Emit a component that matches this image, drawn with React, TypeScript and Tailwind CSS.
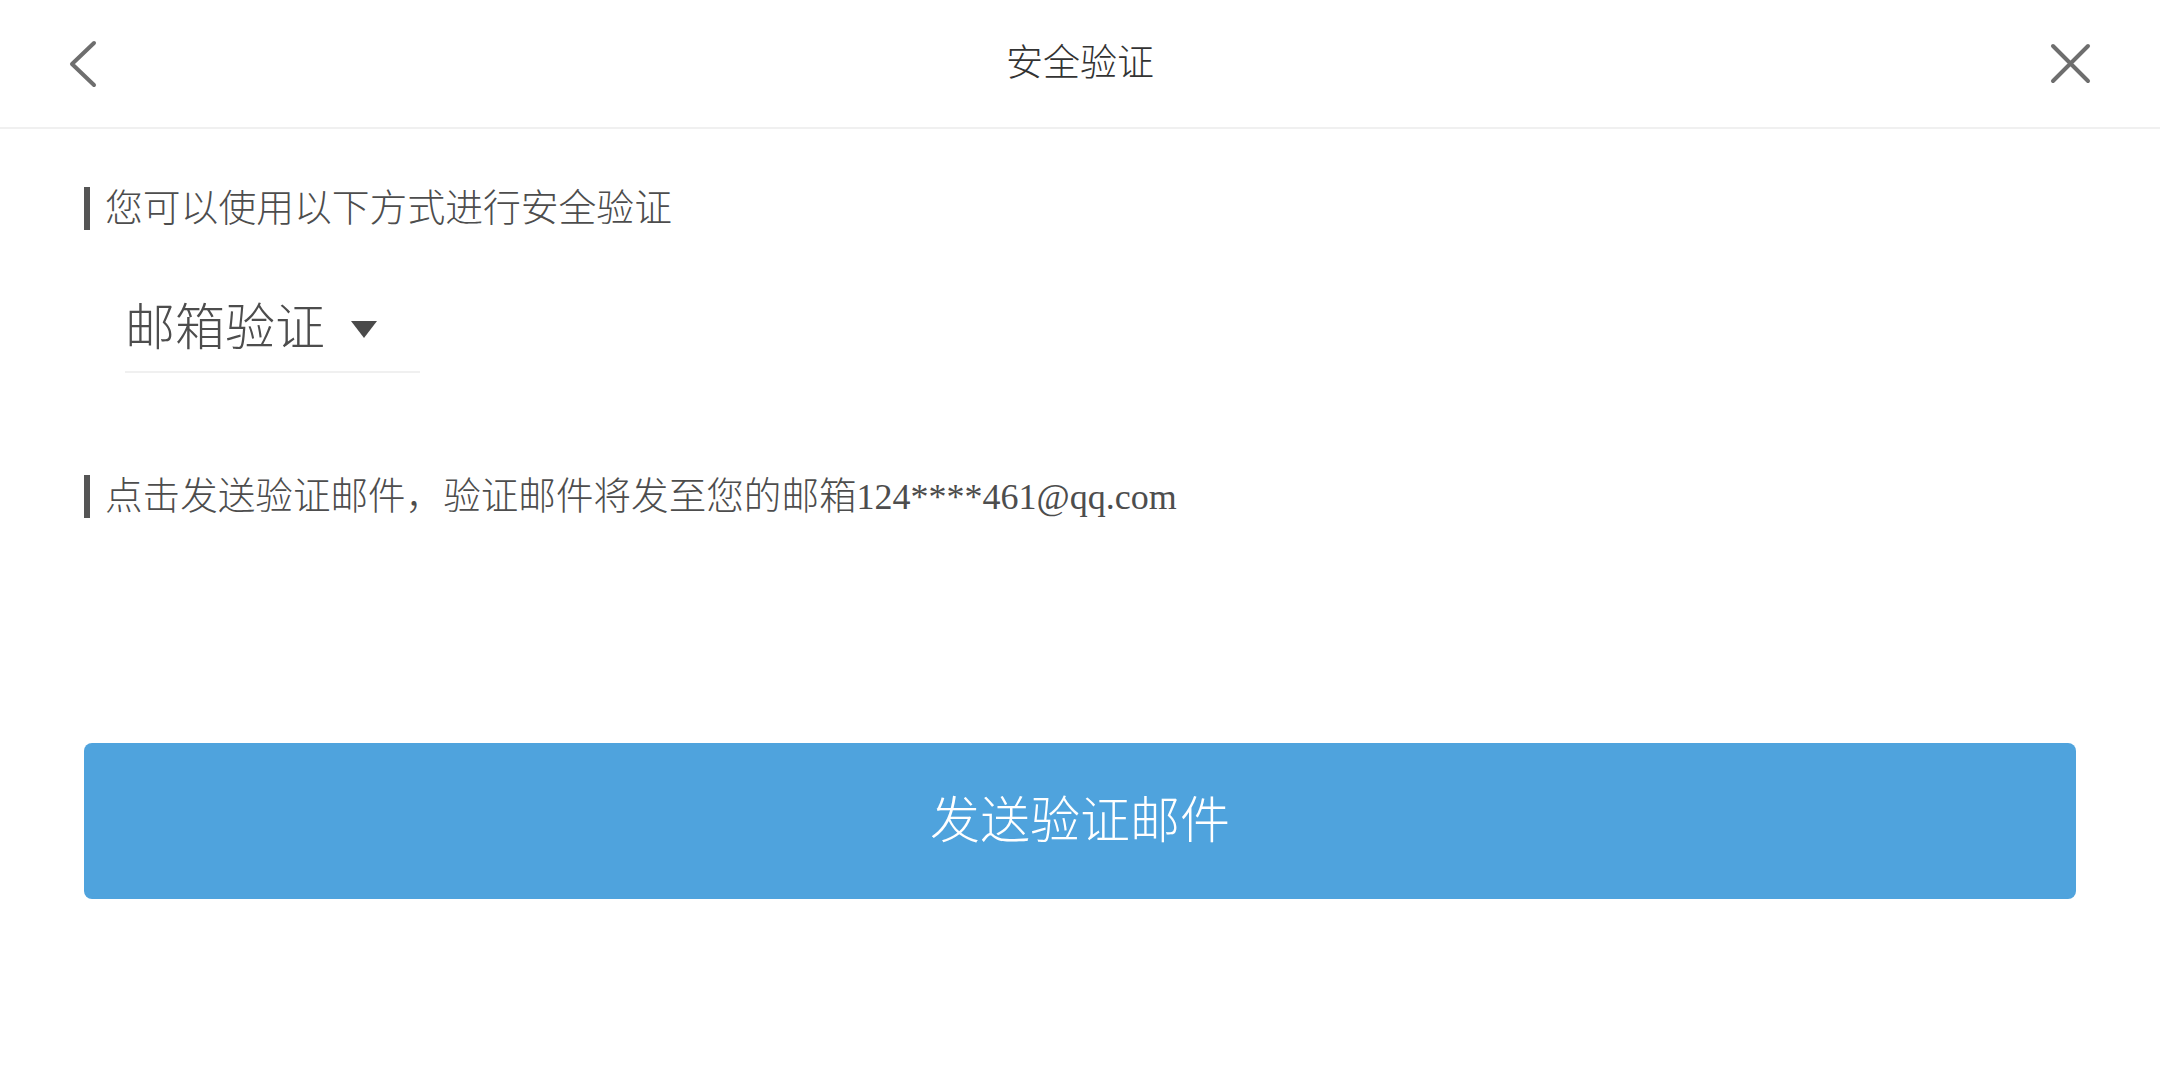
import React from 'react';

const Bar: React.FC<{ children: React.ReactNode; size: string }> = ({ children, size }) => (
  <div className="flex items-center h-[41px]">
    <span className="w-[6px] h-[43px] bg-[#555]" />
    <span className={`ml-[15px] ${size} leading-none text-[#4d4d4d] font-light whitespace-nowrap`}>
      {children}
    </span>
  </div>
);

const App: React.FC = () => {
  return (
    <div className="min-h-screen w-full bg-white font-['Liberation_Serif','Noto_Sans_CJK_SC',serif]">
      {/* header */}
      <header className="grid grid-cols-[1fr_auto_1fr] items-center h-[129px] border-b-2 border-[#f0f0f0]">
        <div className="pl-[69px] flex items-center">
          <svg width="28" height="50" viewBox="0 0 28 50" fill="none">
            <polyline
              points="25,4 3,25 25,46"
              stroke="#6e6e6e"
              strokeWidth="4"
              strokeLinecap="round"
              strokeLinejoin="round"
            />
          </svg>
        </div>
        <h1 className="text-[37px] leading-none text-[#333] font-light">安全验证</h1>
        <div className="pr-[68px] flex justify-end items-center">
          <svg width="43" height="43" viewBox="0 0 43 43" fill="none">
            <path d="M4 4 L39 39 M39 4 L4 39" stroke="#6e6e6e" strokeWidth="4" strokeLinecap="round" />
          </svg>
        </div>
      </header>

      <main className="px-[84px]">
        <div className="mt-[59px]">
          <Bar size="text-[37.8px]">您可以使用以下方式进行安全验证</Bar>
        </div>

        {/* method select */}
        <div className="ml-[41px] mt-[56px] w-[295px] h-[88px] flex items-center border-b-2 border-[#f0f0f0]">
          <span className="text-[50px] leading-none text-[#4d4d4d] font-light">邮箱验证</span>
          <svg className="ml-[26px] mt-[2px]" width="26" height="17" viewBox="0 0 26 17">
            <polygon points="0,0 26,0 13,17" fill="#4a4a4a" />
          </svg>
        </div>

        <div className="mt-[103px]">
          <Bar size="text-[37.6px]">
            点击发送验证邮件，验证邮件将发至您的邮箱<span className="text-[36px]">124****461@qq.com</span>
          </Bar>
        </div>

        <button className="mt-[226px] w-full h-[156px] rounded-[8px] bg-[#4fa3dd] flex items-center justify-center">
          <span className="text-[50px] leading-none text-white font-light">发送验证邮件</span>
        </button>
      </main>
    </div>
  );
};

export default App;
